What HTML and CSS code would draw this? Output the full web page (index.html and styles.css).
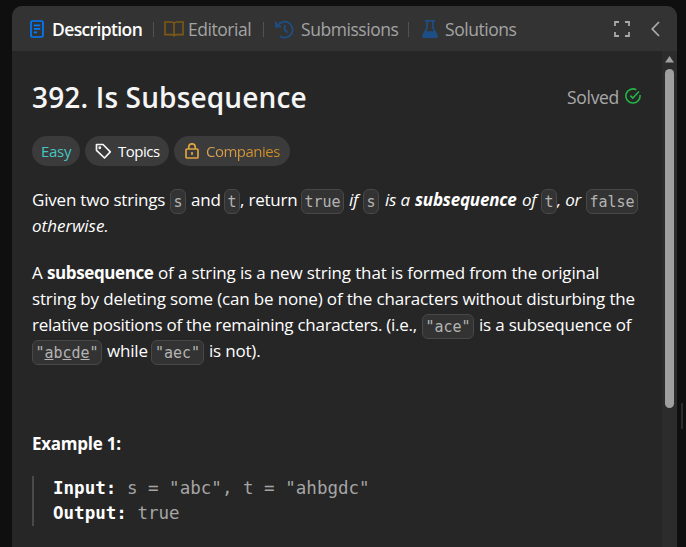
FILE: index.html
```html
<!DOCTYPE html>
<html lang="en">
<head>
<meta charset="utf-8">
<title>392. Is Subsequence</title>
<link rel="stylesheet" href="styles.css">
</head>
<body>
<main class="panel">
  <nav class="tabs">
    <svg class="ic-doc" width="14" height="18" viewBox="0 0 14 18" fill="none" stroke="#007bff" stroke-width="1.7"><rect x="1" y="1" width="12" height="16" rx="1.6"/><path d="M3.8 5.3h6.4M3.8 8.8h6.4M3.8 12.3h3.2"/></svg>
    <span class="tab active">Description</span><i class="sep"></i>
    <svg class="ic-book" width="20" height="16" viewBox="0 0 20 16" fill="none" stroke="#7c5915" stroke-width="1.7"><path d="M10 2.2C9.2 1.2 8.4 1 7.4 1H1v12.6h6.6c1.1 0 1.8.3 2.4 1 .6-.7 1.3-1 2.4-1H19V1h-6.4c-1 0-1.8.2-2.6 1.2zM10 2v12.5"/></svg>
    <span class="tab editorial">Editorial</span><i class="sep"></i>
    <svg class="ic-history" width="19" height="19" viewBox="0 0 19 19" fill="none" stroke="#1d4f86" stroke-width="1.8"><path d="M2.7 5.5A8 8 0 1 1 5.1 16.2M1 1.8v4.7h5M9.8 5v5l2.8 2.6"/></svg>
    <span class="tab submissions">Submissions</span><i class="sep"></i>
    <svg class="ic-flask" width="16" height="18" viewBox="0 0 16 18" fill="#1d4f86"><path fill-rule="evenodd" d="M3 0h10v1.7h-1.2v5.8l3.9 7.8c.7 1.4-.1 2.7-1.6 2.7H1.9C.4 18-.4 16.7.3 15.3L4.2 7.5V1.7H3zM5.9 1.7v6.2L4.2 11.3h7.6l-1.7-3.4V1.7z"/></svg>
    <span class="tab solutions">Solutions</span>
    <svg class="ic-full" width="16" height="16" viewBox="0 0 16 16" fill="none" stroke="#a9a9a9" stroke-width="1.8"><path d="M1 5V1h4M11 1h4v4M15 11v4h-4M5 15H1v-4"/></svg>
    <svg class="ic-left" width="9" height="16" viewBox="0 0 9 16" fill="none" stroke="#a9a9a9" stroke-width="1.8"><path d="M8 1L1.3 8 8 15"/></svg>
  </nav>
  <div class="body">
    <article class="content">
      <header class="heading">
        <h1>392. Is Subsequence</h1>
        <span class="solved">Solved</span>
        <svg class="ic-check" width="16" height="16" viewBox="0 0 16 16" fill="none" stroke="#22b545" stroke-width="1.6"><path d="M11.3 1.7A7.1 7.1 0 1 0 15 7M5.3 7.6l2.5 2.5L14 3.5"/></svg>
      </header>
      <div class="tags">
        <span class="pill easy"><b>Easy</b></span>
        <span class="pill topics"><svg width="17" height="17" viewBox="0 0 17 17" fill="none" stroke="#f5f5f5" stroke-width="1.7" stroke-linejoin="round"><path d="M1.5 1.5H8l7.3 7.3L9.5 15 1.5 7.3z"/><circle cx="4.8" cy="4.7" r=".6"/></svg><b>Topics</b></span>
        <span class="pill companies"><svg width="14" height="16" viewBox="0 0 14 16" fill="none" stroke="#dfa343" stroke-width="1.7"><rect x="1" y="6" width="12" height="9" rx="1"/><path d="M3.8 6V4a3.2 3.2 0 0 1 6.4 0v2M7 9v3"/></svg><b>Companies</b></span>
      </div>
      <div class="line first"><span class="w1">Given two strings</span><code class="c1">s</code><span class="w2">and</span><code class="c1">t</code><span class="w3">, return</span><code class="c4">true</code><em class="w4">if</em><code class="c1">s</code><em class="w5">is a</em><em class="w6"><strong>subsequence</strong></em><em class="w7">of</em><code class="c1">t</code><em class="w8">, or</em><code class="c5">false</code></div>
      <div class="line"><em class="w9">otherwise.</em></div>
      <div class="line second"><span class="a1">A</span><strong class="a2">subsequence</strong><span class="a3">of a string is a new string that is formed from the original</span></div>
      <div class="line"><span class="a4">string by deleting some (can be none) of the characters without disturbing the</span></div>
      <div class="line"><span class="a5">relative positions of the remaining characters. (i.e.,</span><code class="ace">"ace"</code><span class="a6">is a subsequence of</span></div>
      <div class="line"><code class="abcde">"<u>a</u>b<u>c</u>d<u>e</u>"</code><span class="a7">while</span><code class="aec">"aec"</code><span class="a8">is not).</span></div>
      <h2>Example 1:</h2>
      <pre><strong>Input:</strong> s = "abc", t = "ahbgdc"
<strong>Output:</strong> true</pre>
    </article>
    <div class="scrollbar"><svg width="9" height="7" viewBox="0 0 9 7" fill="#9f9f9f"><path d="M4.5 0L9 6.5H0z"/></svg><i class="thumb"></i></div>
  </div>
</main>
<i class="splitter"></i>
</body>
</html>
```

FILE: styles.css
```css
* { box-sizing: border-box; }
body { margin: 0; width: 686px; height: 547px; overflow: hidden; display: flex; background: #0f0f0f; color: #f5f5f5; font-family: "Open Sans", "Noto Sans", sans-serif; }
svg { display: block; flex: none; }
.panel { margin: 6px 0 0 12px; width: 665px; height: 541px; border-radius: 10px 10px 0 0; overflow: hidden; background: #262626; }
.tabs { height: 45px; background: #333; display: flex; align-items: center; padding: 2px 0 0 18px; }
.tab { font-size: 17.5px; line-height: 24px; margin-bottom: 2px; white-space: nowrap; color: #a3a3a3; flex: none; margin-left: 8px; width: 91px; letter-spacing: -.45px; }
.active { width: 91px; color: #fff; font-weight: 600; letter-spacing: -.63px; }
.editorial { width: 65px; margin-left: 4px; }
.submissions { width: 97px; margin-left: 7px; }
.solutions { width: 73px; margin-left: 7px; }
.sep { width: 1px; height: 15px; background: #525252; margin-left: 10px; flex: none; }
.ic-doc, .ic-book, .ic-history, .ic-flask, .ic-full, .ic-left { margin-bottom: 1px; }
.ic-book { margin-left: 10px; }
.ic-history { margin-left: 11px; }
.ic-flask { margin-left: 13px; }
.ic-full { margin-left: 96px; }
.ic-left { margin-left: 21px; }
.body { display: flex; height: 496px; }
.content { width: 650px; padding-left: 20px; }
.heading { display: flex; height: 85px; }
h1 { margin: 28px 0 0; width: 535px; font-size: 28px; line-height: 36px; font-weight: 650; letter-spacing: .15px; white-space: nowrap; }
.solved { margin-top: 34px; width: 53px; font-size: 17.5px; line-height: 24px; color: #a9a9a9; letter-spacing: -.3px; }
.ic-check { margin: 37px 0 0 5px; }
.tags { display: flex; gap: 5px; height: 30px; }
.pill { height: 30px; border-radius: 15px; background: #3b3b3b; display: flex; align-items: center; padding-left: 9px; font-size: 15px; }
.pill b { font-weight: 400; white-space: nowrap; letter-spacing: -.5px; }
.easy { width: 48px; color: #46c6c2; }
.easy b { letter-spacing: -.3px; }
.topics { width: 84px; padding-left: 10px; gap: 6px; color: #fff; }
.companies { width: 116px; padding-left: 11px; gap: 7px; }
.companies b { color: transparent; background: linear-gradient(90deg, #d9a457, #ce8a1e); background-clip: text; -webkit-background-clip: text; }
.line { display: flex; align-items: center; height: 26px; font-size: 17px; line-height: 26px; white-space: nowrap; color: #fff; }
.line span, .line em, .line > strong { display: block; flex: none; letter-spacing: -.2px; }
.first { margin-top: 21px; }
.second { margin-top: 21px; }
code { display: block; flex: none; height: 25px; border: 1px solid #484848; border-radius: 6px; background: #333; color: #b3b3b3; font: 15px/25px "DejaVu Sans Mono", monospace; text-align: center; position: relative; top: 1px; }
.c1 { width: 16px; }
.c4 { width: 43px; }
.c5 { width: 52px; }
.w1 { width: 138px; }
.w2 { width: 38px; padding-left: 5px; }
.w3 { width: 61px; }
.w4 { width: 19px; padding-left: 5px; }
.w5 { width: 36px; padding-left: 6px; }
.w6 { width: 107px; }
.w7 { width: 19px; }
.w8 { width: 29px; }
.line .w9 { letter-spacing: 0; }
.a1 { width: 15px; }
.line > .a2 { width: 111px; letter-spacing: -.4px; }
.line .a3 { letter-spacing: -.15px; }
.line .a4 { letter-spacing: -.16px; }
.ace { width: 52px; }
.line .a5 { width: 390px; letter-spacing: -.27px; }
.a6 { padding-left: 5px; }
.abcde { width: 70px; }
.a7 { width: 49px; padding-left: 5px; }
.aec { width: 53px; }
.a8 { padding-left: 5px; }
strong { font-weight: 700; color: #fff; }
h2 { margin: 67px 0 0; font-size: 17px; line-height: 26px; font-weight: 700; letter-spacing: -.25px; color: #fff; }
pre { margin: 19px 0 0; border-left: 2px solid #4a4a4a; padding-left: 19px; height: 50px; color: #a5a5a5; font: 17.55px/25px "DejaVu Sans Mono", monospace; }
pre strong { color: #fff; }
.scrollbar { width: 15px; background: #2c2c2c; padding: 5px 3px 0; }
.thumb { display: block; width: 9px; height: 339px; margin-top: 6px; border-radius: 5px; background: #9f9f9f; }
.splitter { width: 2px; height: 26px; margin: 403px 0 0 4px; background: #2d2d2d; }
```
